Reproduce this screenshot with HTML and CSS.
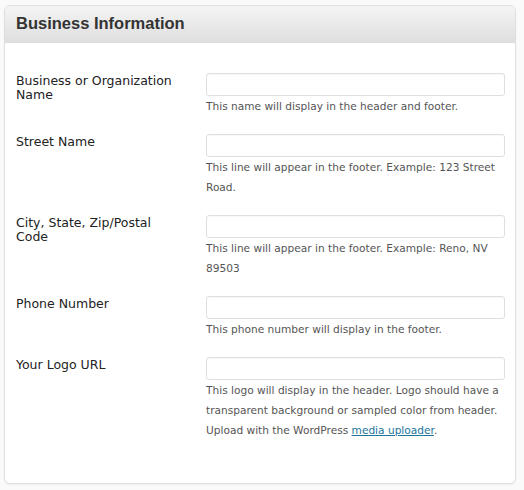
FILE: index.html
```html
<!DOCTYPE html>
<html>
<head>
<meta charset="utf-8">
<link rel="stylesheet" href="styles.css">
</head>
<body>
<div class="panel">
  <div class="panel-head"><h3 class="title">Business Information</h3></div>
  <div class="panel-body">
    <div class="row">
      <label class="label">Business or Organization Name</label>
      <div class="field">
        <input class="input" type="text">
        <p class="desc">This name will display in the header and footer.</p>
      </div>
    </div>
    <div class="row">
      <label class="label">Street Name</label>
      <div class="field">
        <input class="input" type="text">
        <p class="desc">This line will appear in the footer. Example: 123 Street Road.</p>
      </div>
    </div>
    <div class="row">
      <label class="label">City, State, Zip/Postal Code</label>
      <div class="field">
        <input class="input" type="text">
        <p class="desc">This line will appear in the footer. Example: Reno, NV 89503</p>
      </div>
    </div>
    <div class="row">
      <label class="label">Phone Number</label>
      <div class="field">
        <input class="input" type="text">
        <p class="desc">This phone number will display in the footer.</p>
      </div>
    </div>
    <div class="row">
      <label class="label">Your Logo URL</label>
      <div class="field">
        <input class="input" type="text">
        <p class="desc">This logo will display in the header. Logo should have a transparent background or sampled color from header. Upload with the WordPress <a class="link" href="#">media uploader</a>.</p>
      </div>
    </div>
  </div>
</div>
</body>
</html>
```
FILE: styles.css
```css
html, body {
  margin: 0;
  background: #fafafa;
}
body {
  padding: 5px 8px 6px 4px;
  font-family: "DejaVu Sans", "Noto Sans", sans-serif;
  color: #333;
}
.panel {
  width: 512px;
  height: 479px;
  box-sizing: border-box;
  background: #fff;
  border: 1px solid #dfdfdf;
  border-radius: 6px;
  box-shadow: 0 1px 2px rgba(0,0,0,0.06);
  overflow: hidden;
}
.panel-head {
  height: 37px;
  box-sizing: border-box;
  padding-left: 11px;
  padding-bottom: 1px;
  background: linear-gradient(#f4f4f4, #dfdfdf);
  border-bottom: 1px solid #dcdcdc;
  display: flex;
  align-items: center;
}
.title {
  margin: 0;
  font-family: "Liberation Sans", Arial, sans-serif;
  font-size: 16.5px;
  font-weight: bold;
  color: #333;
}
.panel-body {
  padding: 30px 10px 0 11px;
  display: flex;
  flex-direction: column;
  gap: 18px;
}
.row {
  display: grid;
  grid-template-columns: 190px 299px;
}
.label {
  padding-top: 1px;
  padding-right: 26px;
  font-size: 12.5px;
  line-height: 14px;
  color: #222;
}
.field {
  display: flex;
  flex-direction: column;
}
.input {
  box-sizing: border-box;
  height: 23px;
  width: 299px;
  margin: 0;
  border: 1px solid #dfdfdf;
  border-radius: 3px;
  background: #fff;
  box-shadow: inset 0 1px 1px rgba(0,0,0,0.03);
}
.desc {
  margin: 0;
  font-size: 10.6px;
  line-height: 20px;
  color: #555;
}
.link {
  color: #21759b;
  text-decoration: underline;
}
```
